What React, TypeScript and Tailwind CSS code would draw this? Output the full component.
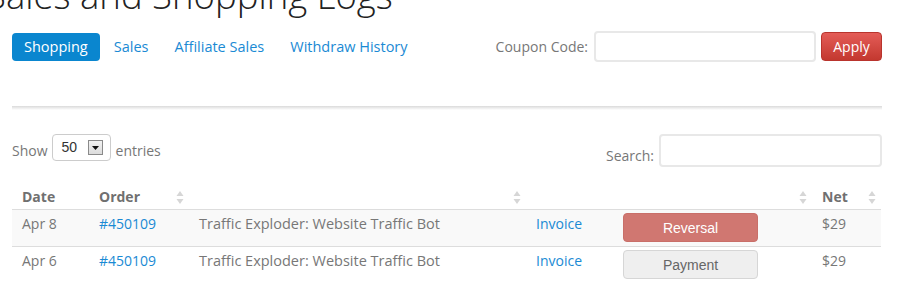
import React from "react";

type Row = {
  date: string;
  order: string;
  product: string;
  kind: "Reversal" | "Payment";
  net: string;
  striped: boolean;
};

const rows: Row[] = [
  { date: "Apr 8", order: "#450109", product: "Traffic Exploder: Website Traffic Bot", kind: "Reversal", net: "$29", striped: true },
  { date: "Apr 6", order: "#450109", product: "Traffic Exploder: Website Traffic Bot", kind: "Payment", net: "$29", striped: false },
];

function SortIcon() {
  return (
    <svg width="8" height="13" viewBox="0 0 8 13" className="shrink-0">
      <path d="M4 0 L7.5 5 L0.5 5 Z" fill="#d6d6d6" />
      <path d="M0.5 8 L7.5 8 L4 13 Z" fill="#d6d6d6" />
    </svg>
  );
}

function Th({ label, sort }: { label?: string; sort?: boolean }) {
  return (
    <th className="pl-[10px] pr-[5px] pt-[1px] pb-[2px] leading-[20px] text-left border-b border-[#dddddd]">
      <div className="flex items-center justify-between">
        <span className="text-[14px] font-bold text-[#707070]">{label}</span>
        {sort && <SortIcon />}
      </div>
    </th>
  );
}

export default function App() {
  const tabs = ["Shopping", "Sales", "Affiliate Sales", "Withdraw History"];

  return (
    <div className="w-[900px] h-[297px] overflow-hidden bg-white font-['Open_Sans',sans-serif]">
      <div className="pl-3 w-[882px]">
        <h1 className="-mt-[23px] -ml-[26px] text-[36.5px] leading-[36px] font-light text-[#222] whitespace-nowrap">
          Sales and Shopping Logs
        </h1>

        {/* tabs + coupon */}
        <div className="mt-[18px] flex items-center justify-between h-[31px]">
          <ul className="flex items-center gap-[2px]">
            {tabs.map((t, i) => (
              <li key={t}>
                <a
                  className={`block px-3 h-[28px] leading-[28px] text-[14.5px] rounded-[4px] ${
                    i === 0 ? "bg-[#0a86cf] text-white" : "text-[#1a8ad4]"
                  }`}
                >
                  {t}
                </a>
              </li>
            ))}
          </ul>
          <div className="flex items-center">
            <span className="text-[14px] text-[#777]">Coupon Code:</span>
            <input className="ml-[6px] w-[222px] h-[31px] border-2 border-[#e8e8e8] rounded-[4px] bg-white outline-none" />
            <button className="ml-[5px] w-[61px] h-[29px] rounded-[4px] text-[14px] text-white bg-linear-to-b from-[#e45c57] to-[#c3382f] border border-[#b9342d]">
              Apply
            </button>
          </div>
        </div>

        {/* divider */}
        <div className="mt-[44px] h-[4px] bg-linear-to-b from-[#dadada] to-white" />

        {/* show / search */}
        <div className="mt-[24px] flex items-start justify-between">
          <div className="flex items-center h-[27px] text-[14px] text-[#777]">
            <span className="mt-[5px]">Show</span>
            <div className="ml-[4px] w-[59px] h-[27px] border border-[#cccccc] rounded-[4px] bg-white flex items-center pl-[9px] pr-[7px] justify-between">
              <span className="font-['Liberation_Sans',sans-serif] text-[14px] text-[#333]">50</span>
              <span className="w-[15px] h-[15px] border border-[#8a8a8a] bg-linear-to-b from-[#f2f2f2] to-[#dcdcdc] flex items-center justify-center">
                <svg width="7" height="4" viewBox="0 0 7 4">
                  <path d="M0 0 L7 0 L3.5 4 Z" fill="#111" />
                </svg>
              </span>
            </div>
            <span className="ml-[5px] mt-[5px]">entries</span>
          </div>
          <div className="flex items-end text-[14px] text-[#777]">
            <span className="mb-[1px]">Search:</span>
            <input className="ml-[5px] w-[223px] h-[33px] border-2 border-[#e8e8e8] rounded-[4px] bg-white outline-none" />
          </div>
        </div>

        {/* table */}
        <table className="mt-[19px] w-[869px] table-fixed border-collapse">
          <colgroup>
            <col className="w-[77px]" />
            <col className="w-[100px]" />
            <col className="w-[337px]" />
            <col className="w-[87px]" />
            <col className="w-[199px]" />
            <col className="w-[69px]" />
          </colgroup>
          <thead>
            <tr>
              <Th label="Date" />
              <Th label="Order" sort />
              <Th sort />
              <Th />
              <Th sort />
              <Th label="Net" sort />
            </tr>
          </thead>
          <tbody>
            {rows.map((r, i) => (
              <tr
                key={i}
                className={`${r.striped ? "bg-[#f9f9f9]" : ""} ${i < rows.length - 1 ? "border-b border-[#dddddd]" : ""}`}
              >
                <td className="px-[10px] pt-[4px] align-top leading-[20px] text-[14px] text-[#777]">{r.date}</td>
                <td className="px-[10px] pt-[4px] align-top leading-[20px] text-[14px] text-[#1a8ad4]">{r.order}</td>
                <td className="px-[10px] pt-[4px] align-top leading-[20px] text-[14.5px] text-[#777] whitespace-nowrap">{r.product}</td>
                <td className="px-[10px] pt-[4px] align-top leading-[20px] text-[14px] text-[#1a8ad4]">Invoice</td>
                <td className="px-[10px] pt-[3px] pb-[4px] align-top">
                  <div
                    className={`w-[135px] h-[29px] rounded-[4px] flex items-center justify-center pt-[1px] font-['Liberation_Sans',sans-serif] text-[14px] ${
                      r.kind === "Reversal"
                        ? "bg-[#d07771] text-white border border-[#c96f69]"
                        : "bg-[#efefef] text-[#666] border border-[#d6d6d6]"
                    }`}
                  >
                    {r.kind}
                  </div>
                </td>
                <td className="px-[10px] pt-[4px] align-top leading-[20px] text-[14px] text-[#777]">{r.net}</td>
              </tr>
            ))}
          </tbody>
        </table>
      </div>
    </div>
  );
}
